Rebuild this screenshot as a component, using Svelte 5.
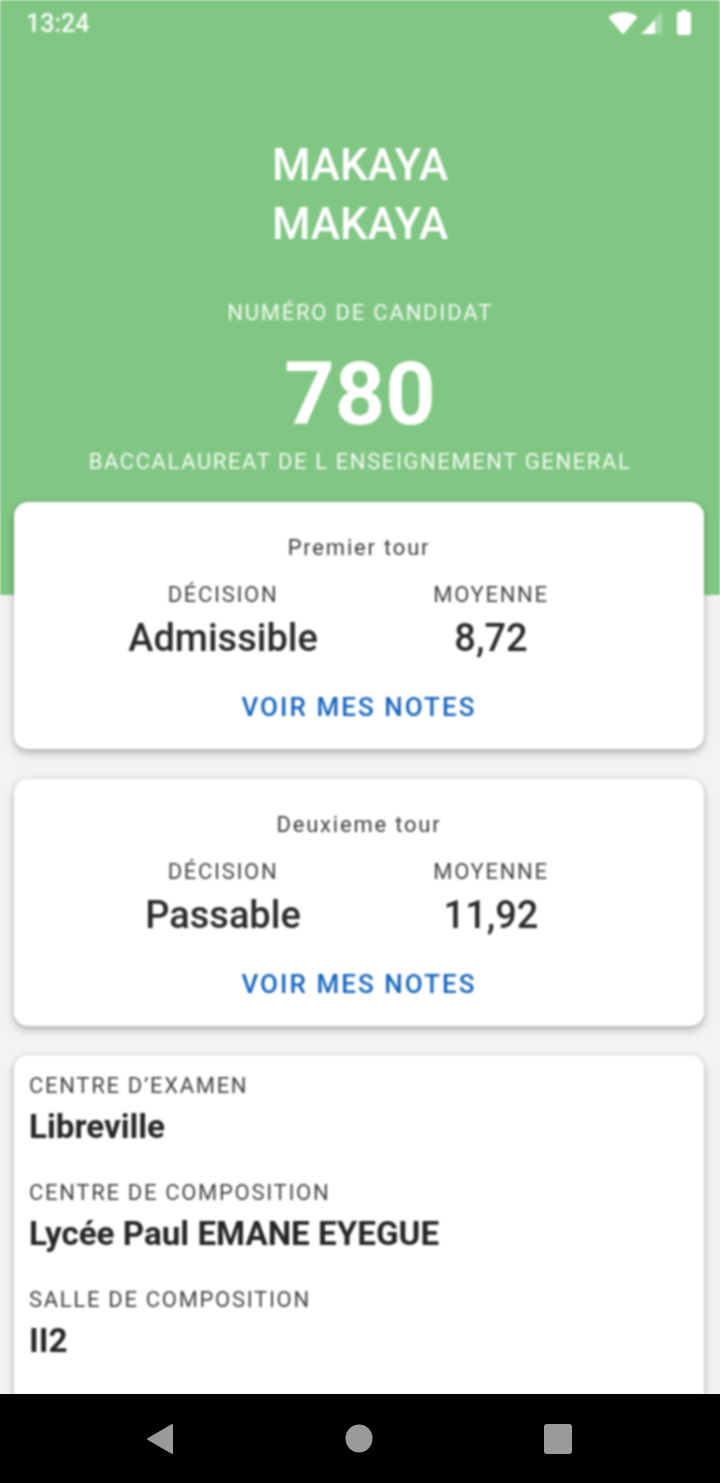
<script>
  const rounds = [
    { title: 'Premier tour', decision: 'Admissible', avg: '8,72' },
    { title: 'Deuxieme tour', decision: 'Passable', avg: '11,92' }
  ];
  const infos = [
    { label: 'CENTRE D’EXAMEN', value: 'Libreville' },
    { label: 'CENTRE DE COMPOSITION', value: 'Lycée Paul EMANE EYEGUE' },
    { label: 'SALLE DE COMPOSITION', value: 'II2' }
  ];
</script>

<div class="screen">
  <div class="scroll">
    <header class="hero">
      <div class="status">
        <span class="time">13:24</span>
        <div class="status-icons">
          <svg width="30" height="24" viewBox="0 0 30 24"><path d="M1.5 5 Q15 -3 28.5 5 Q29.500 6 29 7 L16 22.500 Q15 23.500 14 22.500 L1 7 Q0.500 6 1.500 5Z" fill="#fff"/></svg>
          <svg width="24" height="24" viewBox="0 0 24 24"><path d="M23 0 V23 H1Z" fill="#fff" opacity=".3"/><path d="M16 9 V23 H3Z" fill="#fff"/></svg>
          <svg width="16" height="26" viewBox="0 0 16 26"><path d="M5 1 Q5 0 6 0 H10 Q11 0 11 1 V2 H13 Q15 2 15 4 V23 Q15 25 13 25 H3 Q1 25 1 23 V4 Q1 2 3 2 H5Z" fill="#fff"/></svg>
        </div>
      </div>
      <h1 class="name">MAKAYA<br />MAKAYA</h1>
      <div class="cand-label">NUMÉRO DE CANDIDAT</div>
      <div class="cand-num">780</div>
      <div class="exam">BACCALAUREAT DE L ENSEIGNEMENT GENERAL</div>
    </header>

    <main class="cards">
      {#each rounds as r}
        <section class="card round">
          <div class="round-title">{r.title}</div>
          <div class="cols">
            <div class="col">
              <div class="label">DÉCISION</div>
              <div class="big">{r.decision}</div>
            </div>
            <div class="col">
              <div class="label">MOYENNE</div>
              <div class="big">{r.avg}</div>
            </div>
          </div>
          <button class="link">VOIR MES NOTES</button>
        </section>
      {/each}
      <section class="card info">
        {#each infos as i}
          <div class="info-row">
            <div class="label">{i.label}</div>
            <div class="value">{i.value}</div>
          </div>
        {/each}
      </section>
    </main>
  </div>

  <nav class="nav">
    <span class="nav-item"><svg width="28" height="32" viewBox="0 0 28 32"><path d="M26 2 V30 L2 16Z" fill="#9a9a9a" stroke="#9a9a9a" stroke-width="2" stroke-linejoin="round"/></svg></span>
    <span class="nav-item"><svg width="28" height="29" viewBox="0 0 28 29"><ellipse cx="14" cy="14.500" rx="13.500" ry="14" fill="#9a9a9a"/></svg></span>
    <span class="nav-item"><svg width="28" height="30" viewBox="0 0 28 30"><rect x="0" y="0" width="28" height="30" rx="3" fill="#9a9a9a"/></svg></span>
  </nav>
</div>

<style>
  :global(body) { margin: 0; background: #f3f3f3; }
  .screen {
    width: 720px; height: 1483px; display: flex; flex-direction: column;
    overflow: hidden; font-family: Roboto, "Liberation Sans", sans-serif; background: #f3f3f3;
  }
  .scroll { flex: 1; min-height: 0; overflow: hidden; filter: blur(0.8px); }
  .hero {
    height: 595px; box-sizing: border-box; background: #81c784; color: #fff;
    display: flex; flex-direction: column; align-items: center;
  }
  .status {
    align-self: stretch; height: 46px; box-sizing: border-box; padding: 0 28px 0 26px;
    display: flex; justify-content: space-between; align-items: center; margin-bottom: 90px;
  }
  .time { font-size: 25px; font-weight: 500; opacity: .95; }
  .status-icons { display: flex; align-items: center; gap: 1px; }
  .status-icons svg:last-child { margin-left: 12px; }
  .name { margin: 0; font-size: 44px; line-height: 59px; font-weight: 500; text-align: center; }
  .cand-label { margin-top: 45px; font-size: 22px; line-height: 28px; letter-spacing: 1.8px; opacity: .9; }
  .cand-num { margin-top: 21px; font-size: 88px; line-height: 92px; font-weight: 700; }
  .exam { margin-top: 8px; font-size: 22px; line-height: 28px; letter-spacing: 1.6px; opacity: .9; }
  .cards {
    margin-top: -93px; padding: 0 16px 0 14px; display: flex; flex-direction: column; gap: 30px;
  }
  .card { background: #fff; border-radius: 14px; box-shadow: 0 4px 8px rgba(0,0,0,.25), 0 0 5px rgba(0,0,0,.1); }
  .round { height: 247px; box-sizing: border-box; padding-top: 32px; display: flex; flex-direction: column; align-items: center; color: #333; }
  .round-title { font-size: 22px; line-height: 28px; letter-spacing: 1.8px; color: #3c3c3c; }
  .cols { margin-top: 19px; display: flex; align-self: stretch; padding-left: 74px; }
  .col { display: flex; flex-direction: column; align-items: center; }
  .col:first-child { width: 270px; }
  .col:last-child { width: 266px; }
  .label { font-size: 22px; line-height: 28px; letter-spacing: 1.7px; color: #444; }
  .big { margin-top: 7px; font-size: 38px; line-height: 44px; font-weight: 500; color: #2b2b2b; }
  .link {
    margin-top: 31px; border: 0; background: none; padding: 0; font: inherit;
    font-size: 26px; line-height: 32px; font-weight: 500; letter-spacing: 2.05px; color: #1565c0;
  }
  .info { margin-top: -1px; height: 400px; box-sizing: border-box; padding: 17px 15px; }
  .info-row { height: 107px; }
  .value { margin-top: 8px; font-size: 33.200px; line-height: 38px; font-weight: 700; color: #262626; }
  .nav {
    height: 89px; box-sizing: border-box; background: #000; flex: none;
    display: flex; align-items: center; padding: 0 0 0 60px; filter: blur(0.6px);
  }
  .nav-item { width: 199px; display: flex; justify-content: center; }
</style>
